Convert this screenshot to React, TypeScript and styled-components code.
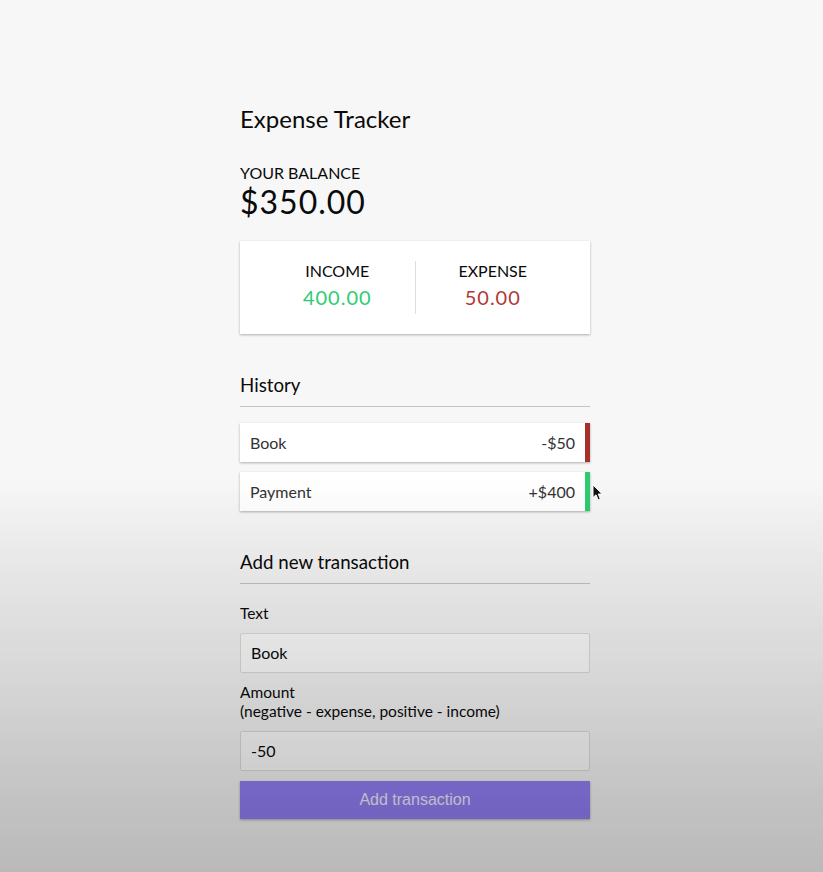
import React from "react";
import styled, { createGlobalStyle } from "styled-components";

const GlobalStyle = createGlobalStyle`
  * { box-sizing: border-box; }
  html, body { margin: 0; padding: 0; }
  body {
    background: #f7f7f7;
    font-family: "Lato", "Noto Sans", sans-serif;
    font-size: 16px;
    min-height: 100vh;
  }
  body::after {
    content: "";
    position: fixed;
    inset: 0;
    pointer-events: none;
    background: linear-gradient(
      to bottom,
      rgba(0, 0, 0, 0) 0%,
      rgba(0, 0, 0, 0) 55%,
      rgba(0, 0, 0, 0.05) 63%,
      rgba(0, 0, 0, 0.12) 76%,
      rgba(0, 0, 0, 0.2) 90%,
      rgba(0, 0, 0, 0.25) 100%
    );
  }
`;

const Page = styled.div`
  display: flex;
  justify-content: center;
  padding: 84px 0 0 7px;
`;

const Container = styled.div`
  width: 350px;
`;

const Title = styled.h2`
  font-size: 24px;
  font-weight: 400;
  margin: 20px 0 30px;
  color: #0a0a0a;
`;

const BalanceLabel = styled.h4`
  font-size: 16px;
  font-weight: 400;
  margin: 0;
  text-transform: uppercase;
  color: #0a0a0a;
`;

const Balance = styled.h1`
  font-size: 32px;
  font-weight: 400;
  letter-spacing: 1px;
  margin: 0;
  color: #0a0a0a;
`;

const IncExp = styled.div`
  background: #fff;
  box-shadow: 0 1px 3px rgba(0, 0, 0, 0.12), 0 1px 2px rgba(0, 0, 0, 0.2);
  padding: 20px;
  display: flex;
  margin: 20px 0;
`;

const IncExpCol = styled.div<{ $divider?: boolean }>`
  flex: 1;
  text-align: center;
  border-right: ${(p) => (p.$divider ? "1px solid #dedede" : "none")};
`;

const ColLabel = styled.h4`
  font-size: 16px;
  font-weight: 400;
  margin: 0;
  text-transform: uppercase;
  color: #0a0a0a;
`;

const Money = styled.p<{ $plus?: boolean }>`
  font-size: 20px;
  letter-spacing: 1px;
  margin: 5px 0;
  color: ${(p) => (p.$plus ? "#2ecc71" : "#b03a34")};
`;

const SectionTitle = styled.h3`
  font-size: 18.72px;
  font-weight: 400;
  color: #0a0a0a;
  border-bottom: 1px solid #c4c4c4;
  padding-bottom: 10px;
  margin: 40px 0 10px;
`;

const List = styled.ul`
  list-style: none;
  padding: 0;
  margin: 16px 0 40px;
`;

const Item = styled.li<{ $plus?: boolean }>`
  position: relative;
  background: #fff;
  box-shadow: 0 1px 3px rgba(0, 0, 0, 0.12), 0 1px 2px rgba(0, 0, 0, 0.2);
  color: #333;
  display: flex;
  justify-content: space-between;
  padding: 10px;
  margin: 10px 0;
  font-size: 16px;
  line-height: 19px;
  border-right: 5px solid ${(p) => (p.$plus ? "#2ecc71" : "#a8302b")};
`;

const Cursor = styled.svg`
  position: absolute;
  right: -19px;
  top: 12px;
  width: 12px;
  height: 17px;
`;

const FormControl = styled.div``;

const Label = styled.label`
  display: inline-block;
  margin: 10px 0;
  font-size: 15.5px;
  line-height: 19px;
  color: #0a0a0a;
`;

const Input = styled.input`
  display: block;
  width: 100%;
  border: 1px solid #dedede;
  border-radius: 2px;
  font-family: "Lato", "Noto Sans", sans-serif;
  font-size: 16px;
  line-height: 18px;
  padding: 10px;
  background: #fff;
  color: #0a0a0a;
  outline: none;
`;

const Button = styled.button`
  display: block;
  width: 100%;
  border: 0;
  background: #937ff6;
  box-shadow: 0 1px 3px rgba(0, 0, 0, 0.12), 0 1px 2px rgba(0, 0, 0, 0.2);
  color: #f2eeff;
  font-family: "Liberation Sans", Arial, sans-serif;
  font-size: 16px;
  line-height: 18px;
  padding: 10px;
  margin: 10px 0 30px;
  cursor: pointer;
`;

export default function App() {
  return (
    <>
      <GlobalStyle />
      <Page>
        <Container>
          <Title>Expense Tracker</Title>
          <BalanceLabel>Your Balance</BalanceLabel>
          <Balance>$350.00</Balance>
          <IncExp>
            <IncExpCol $divider>
              <ColLabel>Income</ColLabel>
              <Money $plus>400.00</Money>
            </IncExpCol>
            <IncExpCol>
              <ColLabel>Expense</ColLabel>
              <Money>50.00</Money>
            </IncExpCol>
          </IncExp>
          <SectionTitle>History</SectionTitle>
          <List>
            <Item>
              <span>Book</span>
              <span>-$50</span>
            </Item>
            <Item $plus>
              <span>Payment</span>
              <span>+$400</span>
              <Cursor viewBox="0 0 12 17">
                <path
                  d="M1 1 L1 13.5 L4 10.8 L6.2 15.8 L8.3 14.9 L6.2 10 L10.2 10 Z"
                  fill="#111"
                  stroke="#fff"
                  strokeWidth="1"
                  strokeLinejoin="round"
                />
              </Cursor>
            </Item>
          </List>
          <SectionTitle>Add new transaction</SectionTitle>
          <form onSubmit={(e) => e.preventDefault()}>
            <FormControl>
              <Label htmlFor="text">Text</Label>
              <Input id="text" type="text" defaultValue="Book" />
            </FormControl>
            <FormControl>
              <Label htmlFor="amount">
                Amount <br />
                (negative - expense, positive - income)
              </Label>
              <Input id="amount" type="text" defaultValue="-50" />
            </FormControl>
            <Button type="submit">Add transaction</Button>
          </form>
        </Container>
      </Page>
    </>
  );
}
